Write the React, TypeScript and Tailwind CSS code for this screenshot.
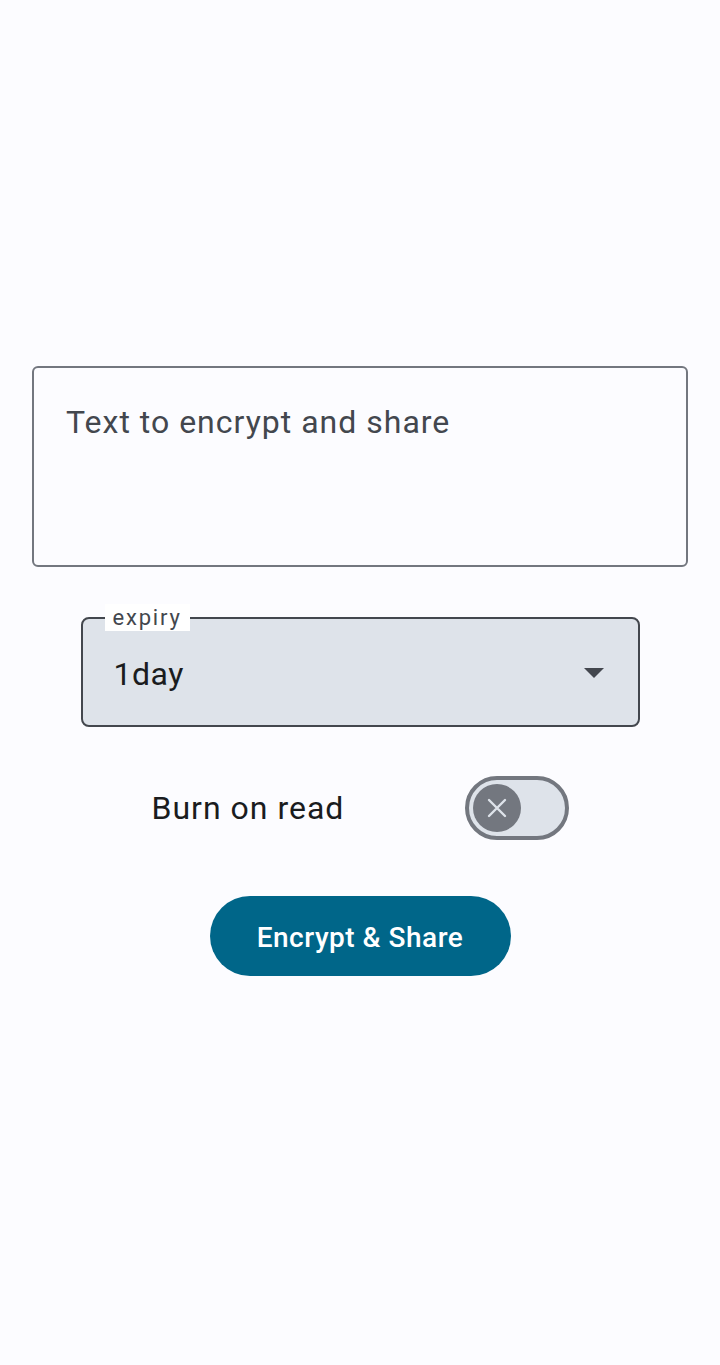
import { useState } from 'react'

const font = { fontFamily: 'Roboto, "Noto Sans", sans-serif' }

function ExpirySelect({ value }: { value: string }) {
  return (
    <div className="relative w-[559px] h-[110px] rounded-[8px] border-2 border-[#43474e] bg-[#dee3ea] flex items-center justify-between pl-[31px] pr-[34px]">
      <span className="absolute top-[-15px] left-[22px] h-[27px] px-2 bg-white text-[22px] leading-[27px] tracking-[1.8px] text-[#43474e]">
        expiry
      </span>
      <span className="text-[32px] leading-none tracking-[0.5px] text-[#1a1c1e] pt-1">{value}</span>
      <svg width="20" height="10" viewBox="0 0 20 10" className="mt-[1px]">
        <path d="M0 0 L20 0 L10 10 Z" fill="#43474e" />
      </svg>
    </div>
  )
}

function BurnSwitch({ on, onChange }: { on: boolean; onChange: (v: boolean) => void }) {
  return (
    <button
      onClick={() => onChange(!on)}
      className="w-[104px] h-[64px] rounded-full border-4 border-[#73777f] bg-[#dee3ea] flex items-center pl-[4px]"
    >
      <span className="w-[48px] h-[48px] rounded-full bg-[#73777f] flex items-center justify-center">
        <svg width="20" height="20" viewBox="0 0 20 20">
          <path d="M2 2 L18 18 M18 2 L2 18" stroke="#dee3ea" strokeWidth="2.4" strokeLinecap="round" />
        </svg>
      </span>
    </button>
  )
}

export default function App() {
  const [text, setText] = useState('')
  const [burn, setBurn] = useState(false)

  return (
    <div className="min-h-screen bg-[#fcfcff] flex flex-col items-center pt-[366px]" style={font}>
      <textarea
        value={text}
        onChange={e => setText(e.target.value)}
        placeholder="Text to encrypt and share"
        className="w-[656px] h-[201px] rounded-[6px] border-2 border-[#73777f] bg-transparent resize-none outline-none pl-8 pt-[30px] pr-8 text-[32px] leading-[48px] tracking-[1px] text-[#1a1c1e] placeholder:text-[#43474e]"
      />

      <div className="mt-[50px]">
        <ExpirySelect value="1day" />
      </div>

      <div className="mt-[49px] w-[417px] flex items-center justify-between">
        <span className="text-[32px] leading-none tracking-[1px] text-[#1a1c1e]">Burn on read</span>
        <BurnSwitch on={burn} onChange={setBurn} />
      </div>

      <button className="mt-[56px] w-[301px] h-[80px] rounded-full bg-[#006689] text-white text-[28px] font-medium tracking-[0.5px] pt-[3px]">
        Encrypt &amp; Share
      </button>
    </div>
  )
}
